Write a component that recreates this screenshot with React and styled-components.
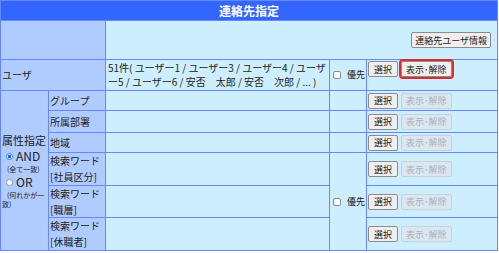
import React from "react";
import styled, { createGlobalStyle } from "styled-components";

const GlobalStyle = createGlobalStyle`
  html, body {
    margin: 0;
    padding: 0;
    background: #fff;
  }
  body {
    font-family: "Noto Sans CJK JP", "Noto Sans", sans-serif;
    color: #222;
  }
`;

const tones = {
  head: "#3366ff",
  label: "#b0ccff",
  data: "#cceeff",
};

const Board = styled.div`
  display: grid;
  width: 498px;
  box-sizing: border-box;
  grid-template-columns: 47px 56px 223px 36px 130px;
  grid-template-rows: 19px 38px 30px 19px 21px 19px 32px 31px 32px;
  gap: 1px;
  padding: 1px;
  background: #6688ff;
`;

const Cell = styled.div`
  grid-column: ${p => p.$col};
  grid-row: ${p => p.$row};
  background: ${p => tones[p.$tone || "data"]};
  display: flex;
  align-items: ${p => p.$valign || "center"};
  justify-content: ${p => p.$align || "flex-start"};
  padding: ${p => p.$pad || "0 1px"};
  font-size: 10px;
  line-height: 16px;
  min-width: 0;
`;

const Title = styled(Cell)`
  color: #fff;
  font-weight: bold;
  font-size: 12px;
`;

const Names = styled.div`
  line-height: 14px;
  line-break: loose;
`;

const Actions = styled(Cell)`
  gap: 3px;
`;

const Btn = styled.button`
  font-family: inherit;
  font-size: 9px;
  line-height: 13px;
  height: 16px;
  padding: 0 ${p => p.$pad || 5}px;
  border-radius: 2px;
  white-space: nowrap;
  cursor: pointer;
  background: ${p => (p.disabled ? "#dbe6ef" : "#efefef")};
  color: ${p => (p.disabled ? "#a9b3bd" : "#222")};
  border: 1px solid ${p => (p.disabled ? "#c6d2dc" : "#8c8c8c")};
  outline: ${p => (p.$marked ? "2px solid #e02a2a" : "none")};
`;

const Priority = styled.label`
  display: flex;
  align-items: center;
  font-size: 9px;
  padding-left: 2px;
  white-space: nowrap;
`;

const Check = styled.input.attrs({ type: "checkbox" })`
  appearance: none;
  width: 8px;
  height: 8px;
  margin: 0 6px 0 0;
  border: 1px solid #8a8a8a;
  border-radius: 2px;
  background: #fff;
`;

const Stack = styled.div`
  display: flex;
  flex-direction: column;
  width: 100%;
`;

const StackTitle = styled.div`
  font-size: 11px;
  line-height: 16px;
`;

const Choice = styled.label`
  display: flex;
  align-items: center;
  height: 16px;
  font-size: 12px;
  line-height: 16px;
`;

const Radio = styled.input.attrs({ type: "radio", name: "attrmode" })`
  appearance: none;
  flex: none;
  width: 7px;
  height: 7px;
  margin: 0 3px 0 4px;
  border-radius: 50%;
  border: 1px solid ${p => (p.defaultChecked ? "#4a86e0" : "#999")};
  background: ${p =>
    p.defaultChecked
      ? "radial-gradient(circle, #1f66d6 0 45%, #dfeaff 55%)"
      : "#fff"};
`;

const Hint = styled.div`
  font-size: 7px;
  line-height: 9px;
  text-indent: 5px;
  margin-top: 1px;
`;

const groups = [
  { label: ["グループ"] },
  { label: ["所属部署"] },
  { label: ["地域"] },
  { label: ["検索ワード", "[社員区分]"] },
  { label: ["検索ワード", "[職層]"] },
  { label: ["検索ワード", "[休職者]"] },
];

const Buttons = ({ row, marked, top }) => (
  <Actions $col="5" $row={row} $valign={top ? "flex-start" : "center"} $pad={top ? "1px 1px 0" : "0 1px"}>
    <Btn>選択</Btn>
    <Btn disabled={!marked} $marked={marked} $pad={4}>表示･解除</Btn>
  </Actions>
);

export default function App() {
  return (
    <>
      <GlobalStyle />
      <Board>
        <Title $col="1 / 6" $row="1" $tone="head" $align="center">連絡先指定</Title>

        <Cell $col="1 / 3" $row="2" $tone="label" />
        <Cell $col="3 / 6" $row="2" $align="flex-end" $pad="0 6px 0 0">
          <Btn $pad={3}>連絡先ユーザ情報</Btn>
        </Cell>

        <Cell $col="1 / 3" $row="3" $tone="label">ユーザ</Cell>
        <Cell $col="3" $row="3" $pad="0 2px">
          <Names>
            51件( ユーザー1 / ユーザー3 / ユーザー4 / ユーザー5 / ユーザー6 / 安否　太郎 / 安否　次郎 / ... )
          </Names>
        </Cell>
        <Cell $col="4" $row="3">
          <Priority><Check />優先</Priority>
        </Cell>
        <Buttons row="3" marked top />

        <Cell $col="1" $row="4 / 10" $tone="label">
          <Stack>
            <StackTitle>属性指定</StackTitle>
            <Choice><Radio defaultChecked />AND</Choice>
            <Hint>(全て一致)</Hint>
            <Choice><Radio />OR</Choice>
            <Hint>(何れかが一致)</Hint>
          </Stack>
        </Cell>

        {groups.map((g, i) => {
          const row = String(i + 4);
          return (
            <React.Fragment key={row}>
              <Cell $col="2" $row={row} $tone="label">
                <div>
                  {g.label.map(t => (
                    <div key={t}>{t}</div>
                  ))}
                </div>
              </Cell>
              <Cell $col="3" $row={row} />
              {i < 3 && <Cell $col="4" $row={row} />}
              <Buttons row={row} />
            </React.Fragment>
          );
        })}
        <Cell $col="4" $row="7 / 10">
          <Priority><Check />優先</Priority>
        </Cell>
      </Board>
    </>
  );
}
